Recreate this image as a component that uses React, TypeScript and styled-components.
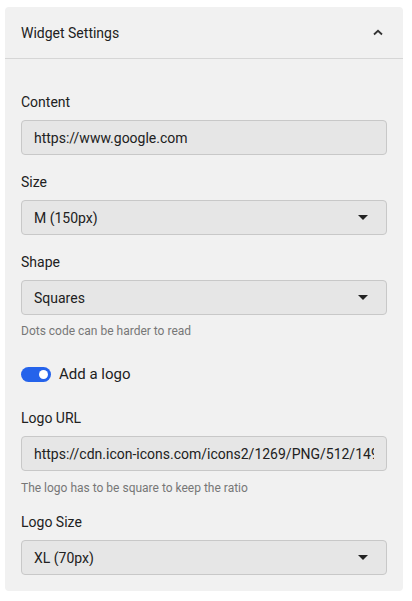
import React from "react";
import styled, { createGlobalStyle } from "styled-components";

const Global = createGlobalStyle`
  html, body { margin: 0; padding: 0; background: #ffffff; }
  body { font-family: Roboto, "Noto Sans", Arial, sans-serif; color: #212121; }
  * { box-sizing: border-box; }
`;

const Page = styled.div`
  padding: 7px 9px 9px 5px;
`;

const Panel = styled.section`
  background: #f1f1f1;
  border-radius: 4px;
  width: 398px;
`;

const Header = styled.div`
  height: 52px;
  display: flex;
  align-items: center;
  justify-content: space-between;
  padding: 0 20px 0 16px;
  border-bottom: 1px solid #d6d6d6;
`;

const Title = styled.span`
  font-size: 14px;
  line-height: 20px;
  color: #212121;
`;

const Body = styled.div`
  padding: 33px 16px 16px 16px;
  display: flex;
  flex-direction: column;
`;

const Field = styled.div<{ $mb?: number }>`
  display: flex;
  flex-direction: column;
  margin-bottom: ${(p) => (p.$mb ?? 17)}px;
`;

const Label = styled.label`
  font-size: 14px;
  line-height: 20px;
  color: #212121;
  margin-bottom: 8px;
`;

const InputBox = styled.div`
  height: 35px;
  border: 1px solid #c8c8c8;
  border-radius: 4px;
  background: #e6e6e6;
  display: flex;
  align-items: center;
  padding: 0 12px;
  font-size: 14px;
  color: #212121;
  overflow: hidden;
  white-space: nowrap;
`;

const Value = styled.span`
  flex: 1;
  overflow: hidden;
  white-space: nowrap;
`;

const Caret = styled.span`
  width: 0;
  height: 0;
  border-left: 5px solid transparent;
  border-right: 5px solid transparent;
  border-top: 5px solid #222;
  margin-right: 6px;
`;

const Help = styled.div<{ $mt?: number }>`
  font-size: 12px;
  line-height: 16px;
  color: #777777;
  margin-top: ${(p) => (p.$mt ?? 8)}px;
`;

const ToggleRow = styled.div`
  display: flex;
  align-items: center;
  gap: 8px;
  margin: 25px 0 24px 0;
`;

const Track = styled.span`
  width: 30px;
  height: 15px;
  border-radius: 8px;
  background: #2563eb;
  display: flex;
  align-items: center;
  justify-content: flex-end;
  padding-right: 3px;
`;

const Knob = styled.span`
  width: 9px;
  height: 9px;
  border-radius: 50%;
  background: #ffffff;
`;

const ToggleText = styled.span`
  font-size: 15px;
  line-height: 20px;
  color: #212121;
`;

const Select = ({ value }: { value: string }) => (
  <InputBox>
    <Value>{value}</Value>
    <Caret />
  </InputBox>
);

export default function App() {
  return (
    <Page>
      <Global />
      <Panel>
        <Header>
          <Title>Widget Settings</Title>
          <svg width="10" height="7" viewBox="0 0 10 7">
            <path d="M1 5.5 L5 1.8 L9 5.5" fill="none" stroke="#333" strokeWidth="1.8" />
          </svg>
        </Header>
        <Body>
          <Field>
            <Label>Content</Label>
            <InputBox>
              <Value>https://www.google.com</Value>
            </InputBox>
          </Field>
          <Field>
            <Label>Size</Label>
            <Select value="M (150px)" />
          </Field>
          <Field $mb={0}>
            <Label>Shape</Label>
            <Select value="Squares" />
            <Help>Dots code can be harder to read</Help>
          </Field>
          <ToggleRow>
            <Track>
              <Knob />
            </Track>
            <ToggleText>Add a logo</ToggleText>
          </ToggleRow>
          <Field $mb={16}>
            <Label>Logo URL</Label>
            <InputBox>
              <Value>https://cdn.icon-icons.com/icons2/1269/PNG/512/149</Value>
            </InputBox>
            <Help $mt={9}>The logo has to be square to keep the ratio</Help>
          </Field>
          <Field $mb={0}>
            <Label>Logo Size</Label>
            <Select value="XL (70px)" />
          </Field>
        </Body>
      </Panel>
    </Page>
  );
}
